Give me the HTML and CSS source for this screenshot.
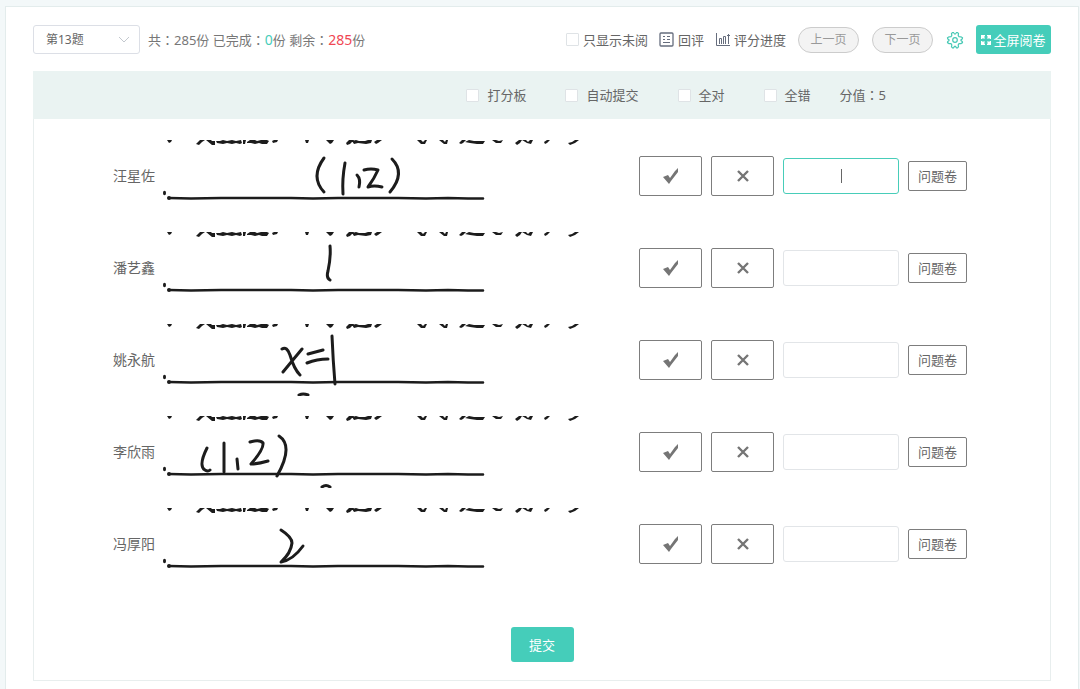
FILE: index.html
```html
<!DOCTYPE html>
<html lang="zh-CN">
<head>
    <meta charset="UTF-8">
    <meta name="viewport" content="width=device-width, initial-scale=1.0">
    <title>阅卷</title>

    <link rel="stylesheet" href="styles.css">
</head>
<body>
    <!-- shared drawings -->
    <svg class="defs" aria-hidden="true">
        <symbol id="paper" viewBox="0 0 420 72">
            <path d="M4 0h5l-1 2-2 1zM33 4l4-4h5l-3 2-3 3zM43 0h5l1 1h3v4h-3zM53 1l4 0 3-1 4 1 5-1 4 1 5-1 1 3-2 1-4-1-4 1-5-1-4 1-6-1zM80 0h3l-1 4-2 0zM84 2l3-2h5l2 1 4-1 6 0 2 1-2 3-5 0-3-1-4 1-4-1-4 0zM109 1l2-1h4l-1 2-4 1zM142 0h4l-1 3-2 0zM163 0h8l-2 3-2 1-2-2zM183 3l3-3h5l-4 4-3 1zM189 1l4-1 3 1 6 0 3-1h4l-1 3-5 1-8-1-4 1zM211 2l3-2h5l-4 3-2 1zM254 0h4l2 2 2-2h2l-2 4-4 0zM276 0h4l2 2 1-2h2l-1 4-3 0zM296 3l3-3h4l-3 3-2 1zM302 2l4-2 5 1h6l5 0-2 3-6 0-7-1zM329 0h4l3 1 4-1-2 3-5 0zM352 3l4-3h3l-2 3-3 2zM359 0l4 0 2 2 2-2h3l-2 4-4-1zM381 2l3-2h3l-3 3-2 1zM405 3l4-1 3-2h4l-4 3-5 2z" fill="#1c1c1c" stroke="none" />
            <path d="M6 58l22 .5 30-.5h70l22 .5 25-.5h60l28 .5 22-.5 20 .5h15" fill="none" stroke="#1c1c1c" stroke-width="2.600" />
            <circle cx="6" cy="58" r="2" fill="#1c1c1c" stroke="none" />
            <ellipse cx="1.500" cy="53" rx="1.500" ry="2.200" fill="#1c1c1c" stroke="none" />
        </symbol>
        <symbol id="tick" viewBox="0 0 16 16">
            <path d="M0 9l5-2 2 3 5-7 3-3v4l-7 9-2 3z" fill="#757575" />
        </symbol>
        <symbol id="cross" viewBox="0 0 14 14">
            <path d="M2 2l10 10M12 2L2 12" fill="none" stroke="#757575" stroke-width="2.400" />
        </symbol>
    </svg>

    <div class="page">
        <div class="toolbar">
            <div class="select-wrap">
                <select class="question" aria-label="题号">
                    <option>第13题</option>
                </select>
                <svg class="arrow" viewBox="0 0 12 8"><path d="M1 1l5 5 5-5" fill="none" stroke="#c3c8ce" /></svg>
            </div>
            <div class="count">共<span class="colon" lang="zh-TW">：</span>285份 已完成<span class="colon" lang="zh-TW">：</span><span class="finished">0</span>份 剩余<span class="colon" lang="zh-TW">：</span><span class="remain">285</span>份</div>

            <div class="tools">
                <label class="unread"><input type="checkbox" class="check">只显示未阅</label>
                <a href="#" class="tool">
                    <svg width="15" height="15" viewBox="0 0 15 15" fill="none" stroke="#666d7d">
                        <rect x="1" y="1" width="13" height="13" rx="1" stroke-width="1.300" />
                        <path d="M4 4.500h2M8 4.500h3M4 7.500h2M8 7.500h3M4 10.500h7" />
                    </svg>
                    回评
                </a>
                <a href="#" class="tool">
                    <svg width="15" height="15" viewBox="0 0 15 15" fill="none" stroke="#666d7d">
                        <path d="M1.500 1v12.500H15M4.500 12V6.500h2V12M8.500 12V4.500h2V12M13.500 12V2M12 3.500h3" />
                    </svg>
                    评分进度
                </a>
                <button class="pill">上一页</button>
                <button class="pill">下一页</button>
                <a href="#" class="setting" aria-label="设置">
                    <svg width="18" height="18" viewBox="0 0 18 18" fill="none" stroke="#48c9b5" stroke-width="1.200">
                        <path d="M6.500 1.500h1l1 1.500h1l1-1.500h1l1 1-.3 2 .8 1.200 2 .1 1.500 1-.2 1-1.300 1v.8l1.300 1 .2 1-1.500 1-2 .1-.8 1.200.3 2-1 1h-1l-1-1.500h-1l-1 1.500h-1l-1-1 .3-2-.8-1.200-2-.1-1.500-1 .2-1 1.300-1v-.8l-1.300-1-.2-1 1.500-1 2-.1.800-1.200-.3-2z" />
                        <circle cx="9" cy="9" r="2.300" />
                    </svg>
                </a>
                <button class="full">
                    <svg width="10" height="10" viewBox="0 0 10 10" fill="#fff">
                        <path d="M0 0h4v1L3 2l1 1-1 1-1-1-1 1H0zM10 0v4H9L8 3 7 4 6 3l1-1-1-1V0zM0 10V6h1l1 1 1-1 1 1-1 1 1 1v1zM10 10H6V9l1-1-1-1 1-1 1 1 1-1h1z" />
                    </svg>
                    全屏阅卷
                </button>
            </div>
        </div>

        <div class="options">
            <label class="option"><input type="checkbox" class="check">打分板</label>
            <label class="option"><input type="checkbox" class="check">自动提交</label>
            <label class="option"><input type="checkbox" class="check">全对</label>
            <label class="option"><input type="checkbox" class="check">全错</label>
            <span>分值<span class="colon" lang="zh-TW">：</span>5</span>
        </div>

        <div class="panel">
            <div class="list">
                <div class="row">
                    <label class="name" for="score1">汪星佐</label>
                    <svg class="answer" viewBox="0 0 420 72">
                        <use href="#paper" />
                        <path d="M161 18q-14 19 0 34M182 23q-3 16-2 31M194 35q4 4 2 12M201 30q7-2 14 0-4 9-10 17 6-2 14 0M229 19q14 14-2 33" />
                    </svg>
                    <div class="actions">
                        <button class="mark" aria-label="对"><svg width="16" height="16"><use href="#tick" /></svg></button>
                        <button class="mark" aria-label="错"><svg width="14" height="14"><use href="#cross" /></svg></button>
                        <input type="text" class="score active" id="score1">
                        <button class="problem">问题卷</button>
                    </div>
                </div>

                <div class="row">
                    <label class="name" for="score2">潘艺鑫</label>
                    <svg class="answer" viewBox="0 0 420 72">
                        <use href="#paper" />
                        <path d="M167 14q1 11-2 25-2 7 2 9" />
                    </svg>
                    <div class="actions">
                        <button class="mark" aria-label="对"><svg width="16" height="16"><use href="#tick" /></svg></button>
                        <button class="mark" aria-label="错"><svg width="14" height="14"><use href="#cross" /></svg></button>
                        <input type="text" class="score" id="score2">
                        <button class="problem">问题卷</button>
                    </div>
                </div>

                <div class="row">
                    <label class="name" for="score3">姚永航</label>
                    <svg class="answer" viewBox="0 0 420 72">
                        <use href="#paper" />
                        <path d="M119 25q5-3 8 6 4 14 10 20M139 25q-10 12-19 23M145 30l15-4M144 39q10-4 21-4M169 12q1 24 3 48M136 71q4-2 9 0" />
                    </svg>
                    <div class="actions">
                        <button class="mark" aria-label="对"><svg width="16" height="16"><use href="#tick" /></svg></button>
                        <button class="mark" aria-label="错"><svg width="14" height="14"><use href="#cross" /></svg></button>
                        <input type="text" class="score" id="score3">
                        <button class="problem">问题卷</button>
                    </div>
                </div>

                <div class="row">
                    <label class="name" for="score4">李欣雨</label>
                    <svg class="answer" viewBox="0 0 420 72">
                        <use href="#paper" />
                        <path d="M44 32q-9 18-2 22 3 2 5 0M61 27l0 29M74 43l1 10M87 26q10-3 13 1 1 6-12 21 7 0 17-3M116 20q15 10-2 40M159 71q4-3 8 0" />
                    </svg>
                    <div class="actions">
                        <button class="mark" aria-label="对"><svg width="16" height="16"><use href="#tick" /></svg></button>
                        <button class="mark" aria-label="错"><svg width="14" height="14"><use href="#cross" /></svg></button>
                        <input type="text" class="score" id="score4">
                        <button class="problem">问题卷</button>
                    </div>
                </div>

                <div class="row">
                    <label class="name" for="score5">冯厚阳</label>
                    <svg class="answer" viewBox="0 0 420 72">
                        <use href="#paper" />
                        <path d="M118 22q11 7 11 13-1 10-11 19 12-2 22-16" />
                    </svg>
                    <div class="actions">
                        <button class="mark" aria-label="对"><svg width="16" height="16"><use href="#tick" /></svg></button>
                        <button class="mark" aria-label="错"><svg width="14" height="14"><use href="#cross" /></svg></button>
                        <input type="text" class="score" id="score5">
                        <button class="problem">问题卷</button>
                    </div>
                </div>
            </div>

            <button class="submit">提交</button>
        </div>
    </div>
</body>
</html>
```

FILE: styles.css
```css
* {
    box-sizing: border-box;
}

body {
    margin: 0;
    padding: 6px 1px 0 5px;
    background-color: #f3f8f9;
    font-family: "Noto Sans", "Noto Sans CJK SC", sans-serif;
    font-size: 13px;
    line-height: 20px;
    color: #666;
}

button, input, select {
    font-family: inherit;
    font-size: 13px;
    line-height: 20px;
    color: #666;
    margin: 0;
    padding: 0;
}

button {
    cursor: pointer;
    white-space: nowrap;
}

.defs {
    display: none;
}

/* the full width colon sits in the middle */
.colon {
    font-family: "Noto Sans CJK TC", sans-serif;
}

.page {
    background-color: white;
    border: 1px solid #e3ecec;
    border-bottom: none;
    padding: 18px 27px 8px;
}

.toolbar {
    display: flex;
    align-items: center;
    height: 29px;
    margin-bottom: 17px;
    white-space: nowrap;
}

.select-wrap {
    position: relative;
    margin-right: 8px;
}

.question {
    display: block;
    width: 107px;
    height: 29px;
    padding-left: 12px;
    border: 1px solid #dcdfe6;
    border-radius: 3px;
    background-color: white;
    font-size: 12px;
    appearance: none;
}

.arrow {
    position: absolute;
    right: 10px;
    top: 11px;
    width: 12px;
    height: 8px;
    pointer-events: none;
}

.count {
    color: #777;
}

.finished {
    font-size: 14px;
    color: #48cdb9;
}

.remain {
    font-size: 14px;
    color: #f04653;
}

.tools {
    display: flex;
    align-items: center;
    gap: 11px;
    margin-left: auto;
}

.check {
    appearance: none;
    width: 13px;
    height: 13px;
    background-color: white;
    border: 1px solid #dfe3e6;
    border-radius: 1px;
}

.unread {
    display: flex;
    align-items: center;
    gap: 4px;
}

.tool {
    display: flex;
    align-items: center;
    gap: 4px;
    color: #666;
    text-decoration: none;
}

.pill {
    width: 61px;
    height: 26px;
    margin: 0 1px;
    border: 1px solid #ccc;
    border-radius: 13px;
    background-color: #f3f3f3;
    font-size: 12px;
    color: #999;
}

.setting {
    display: flex;
    padding: 0 1px;
}

.full {
    display: flex;
    align-items: center;
    justify-content: center;
    gap: 2px;
    width: 75px;
    height: 29px;
    border: none;
    border-radius: 3px;
    background-color: #45cdba;
    color: white;
}

.options {
    display: flex;
    align-items: center;
    justify-content: flex-end;
    gap: 29px;
    height: 48px;
    padding-right: 165px;
    background-color: #eaf3f2;
}

.option {
    display: flex;
    align-items: center;
    gap: 8px;
    padding-left: 10px;
}

.panel {
    padding: 21px 0 18px;
    border: 1px solid #e8eeee;
    border-top: none;
}

.list {
    display: flex;
    flex-direction: column;
    gap: 20px;
    max-width: 858px;
    margin: 0 auto;
}

.row {
    display: flex;
    align-items: center;
}

.name {
    width: 50px;
    font-size: 14px;
}

.answer {
    width: 420px;
    height: 72px;
    fill: none;
    stroke: #1c1c1c;
    stroke-width: 3;
    stroke-linecap: round;
    stroke-linejoin: round;
}

.actions {
    display: flex;
    align-items: center;
    gap: 9px;
    margin-left: 56px;
}

.mark {
    display: flex;
    align-items: center;
    justify-content: center;
    width: 63px;
    height: 40px;
    border: 1px solid #7d7d7d;
    border-radius: 2px;
    background-color: white;
}

.score {
    width: 116px;
    height: 36px;
    border: 1px solid #e2e5e8;
    border-radius: 3px;
    background-color: white;
    text-align: center;
}

.score.active {
    border-color: #48cdb9;
    background: linear-gradient(#666, #666) center / 1px 14px no-repeat;
}

.problem {
    width: 59px;
    height: 30px;
    border: 1px solid #7d7d7d;
    border-radius: 2px;
    background-color: white;
}

.submit {
    display: block;
    width: 63px;
    height: 35px;
    margin: 47px auto 0;
    border: none;
    border-radius: 3px;
    background-color: #45cdba;
    color: white;
}
```
